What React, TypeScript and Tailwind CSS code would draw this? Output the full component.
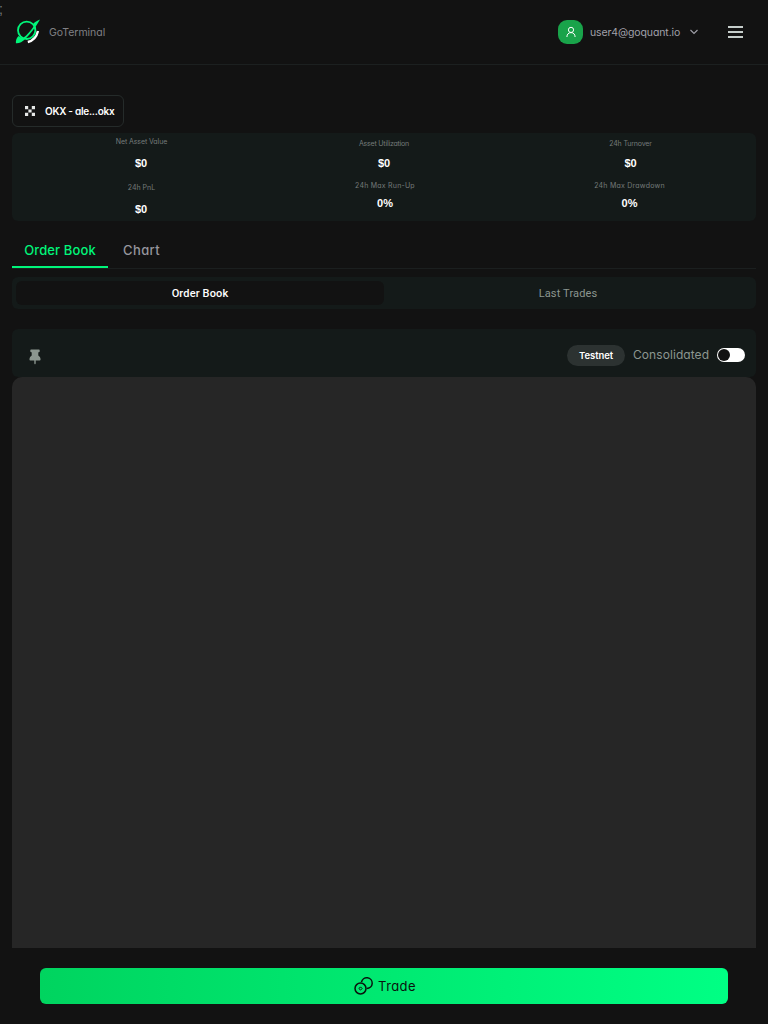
import React from 'react';

const geo = "font-['Inter',sans-serif] [font-feature-settings:'cv11']";

function Logo() {
  return (
    <svg width="26" height="26" viewBox="0 0 26 26" fill="none">
      <path d="M12.800 23C18 21.800 21.600 17.800 23 12" stroke="#fff" strokeWidth="2.400" />
      <circle cx="11.700" cy="11.300" r="8.700" stroke="#00f57a" strokeWidth="1.800" />
      <path
        d="M3.500 17C1.200 19.500.8 21.500.9 24.300c3.300.3 6.200-1.200 9.600-4.600C15.500 14.800 20.500 8.500 25 .6c-3 1.200-5.200 2.700-6.800 4.300l1.100 1.600C15.800 11.800 12.100 15.900 8.300 18.800c-2-.1-3.500-.6-4.800-1.800Z"
        fill="#00f57a"
      />
    </svg>
  );
}

function Stat({ label, value, className, labelClass, valueClass }: { label: string; value: string; className: string; labelClass: string; valueClass: string }) {
  return (
    <div className={`flex flex-col items-center ${className}`}>
      <span className={`text-[7px] leading-[10px] whitespace-nowrap text-[#747a79] ${geo} ${labelClass}`}>{label}</span>
      <span className={`font-['Liberation_Sans',sans-serif] text-[11px] leading-[14px] font-bold text-white ${valueClass}`}>{value}</span>
    </div>
  );
}

export default function App() {
  return (
    <div className={`relative flex h-[1024px] w-full flex-col overflow-hidden bg-[#121212] ${geo}`}>
      <span className="absolute top-0 left-[-1px] font-['Liberation_Sans',sans-serif] text-[14px] leading-[18px] text-[#777]">;</span>
      <header className="flex h-[65px] shrink-0 items-center border-b border-[#1c2020] pr-[25px] pl-[15px]">
        <Logo />
        <span className="ml-2 pt-px text-[10.500px] tracking-[-0.02px] text-[#808084]">GoTerminal</span>
        <div className="ml-auto flex h-6 w-[25px] items-center justify-center rounded-[9px] bg-[#19a34a]">
          <svg width="12" height="12" viewBox="0 0 12 12" fill="none" stroke="white" strokeWidth="1">
            <circle cx="6" cy="3.900" r="2.600" />
            <path d="M1.900 11c0-2.700 1.600-4.400 4.100-4.400s4.100 1.700 4.100 4.400" />
          </svg>
        </div>
        <span className="ml-[7px] w-[90px] pt-px text-[10.500px] tracking-[-0.12px] whitespace-nowrap text-[#a1a1aa]">user4@goquant.io</span>
        <svg className="ml-[10px]" width="8" height="6" viewBox="0 0 8 6" fill="none" stroke="#a1a1aa" strokeWidth="1.100">
          <path d="m.5 1 3.500 3.500L7.500 1" />
        </svg>
        <div className="ml-[30px] flex w-[15px] flex-col gap-[3px]">
          <i className="h-[2px] bg-[#c5cdca]" />
          <i className="h-[2px] bg-[#c5cdca]" />
          <i className="h-[2px] bg-[#c5cdca]" />
        </div>
      </header>

      <main className="flex flex-col px-3 pt-[30px]">
        <div className="flex h-8 w-28 items-center rounded-md border border-[#252b2a] pl-3">
          <svg width="10" height="10" viewBox="0 0 10 10" fill="#e6e8e7">
            <path d="M0 0h3.200v3.200H0zM6.800 0H10v3.200H6.800zM3.400 3.400h3.200v3.200H3.400zM0 6.800h3.200V10H0zM6.800 6.800H10V10H6.800z" />
          </svg>
          <span className="ml-[10px] text-[10px] font-semibold tracking-[-0.27px] whitespace-nowrap text-white">OKX - ale...okx</span>
        </div>

        <section className="mt-[6px] flex h-[88px] rounded-md bg-[#141a19]">
          <div className="flex w-[258px] shrink-0 flex-col">
            <Stat label="Net Asset Value" value="$0" className="pt-[4px]" labelClass="pl-px tracking-[-0.1px]" valueClass="mt-[9px]" />
            <Stat label="24h PnL" value="$0" className="pt-[13px]" labelClass="pl-px" valueClass="mt-[9px]" />
          </div>
          <div className="flex w-[228px] shrink-0 flex-col">
            <Stat label="Asset Utilization" value="$0" className="pt-[6px]" labelClass="tracking-[-0.2px]" valueClass="mt-[7px]" />
            <Stat label="24h Max Run-Up" value="0%" className="pt-[11px] pl-[2px]" labelClass="tracking-[0.22px]" valueClass="mt-[5px]" />
          </div>
          <div className="flex flex-1 flex-col pl-[6px]">
            <Stat label="24h Turnover" value="$0" className="pt-[6px] pl-px" labelClass="tracking-[-0.15px]" valueClass="mt-[7px]" />
            <Stat label="24h Max Drawdown" value="0%" className="pt-[11px] pr-px" labelClass="tracking-[0.24px]" valueClass="mt-[5px]" />
          </div>
        </section>

        <nav className="mt-[12px] flex h-9 border-b border-[#1b1f1f] text-[13px] font-medium">
          <div className="flex h-[35px] w-24 items-center justify-center border-b-2 border-[#00f57a] pt-[2px] tracking-[0.12px] text-[#00f57a]">Order Book</div>
          <div className="ml-[15px] flex h-[35px] items-center pt-px tracking-[0.4px] text-[#96969d]">Chart</div>
        </nav>

        <div className="mt-2 flex h-8 rounded-md bg-[#141a19] p-1 font-['Roboto',sans-serif] text-[11px] font-medium">
          <div className="flex w-[368px] items-center justify-center rounded-md bg-[#121212] pt-[2px] tracking-[0.15px] text-white">Order Book</div>
          <div className="flex flex-1 items-center justify-center pt-[2px] font-normal tracking-[0.15px] text-[#8c9690]">Last Trades</div>
        </div>

        <section className="mt-5 flex h-12 items-center rounded-md bg-[#141a19] pt-[4px] pr-[11px] pl-[17px]">
          <svg className="mt-[4px]" width="12" height="16" viewBox="0 0 12 16" fill="#8c9690">
            <path d="M2 .5h8q.7 0 .7.800v1q0 .9-.9.900h-.5v3.200q2.200 1.200 2.200 3.300v1q0 .8-.8.800H6.700v3L6 15.500l-.7-1v-3h-4q-.8 0-.8-.8v-1q0-2.100 2.200-3.300V3.200h-.5q-.9 0-.9-.9v-1Q1.300.5 2 .5Z" />
          </svg>
          <span className="ml-auto flex h-[21px] w-[58px] items-center justify-center rounded-full bg-[#2c3231] pt-[2px] text-[9.500px] font-semibold tracking-[-0.1px] text-white">Testnet</span>
          <span className="ml-2 w-[76px] text-[12px] tracking-[0.07px] text-[#8c9690]">Consolidated</span>
          <span className="ml-2 flex h-[14px] w-[28px] rounded-full bg-white p-px"><i className="size-3 rounded-full bg-[#121212]" /></span>
        </section>
        <section className="h-[571px] rounded-t-[10px] bg-[#262626]" />
      </main>

      <button className="mx-10 mt-5 flex h-9 shrink-0 items-center justify-center rounded-md bg-linear-to-r from-[#00d45f] to-[#00ff84] pl-[2px] text-[13px] text-[#0a120d]">
        <svg width="20" height="20" viewBox="0 0 20 20" fill="none" stroke="#0a120d" strokeWidth="1.500">
          <circle cx="6.500" cy="12.500" r="5.500" />
          <path d="M7.500 6.200a5.400 5.400 0 1 1 5.300 6.300" />
          <path d="m6.500 10.900 1.600 1.600-1.600 1.600-1.600-1.600z" strokeWidth="1" />
        </svg>
        <span className="ml-1 pt-[2px] tracking-[0.4px]">Trade</span>
      </button>
    </div>
  );
}
